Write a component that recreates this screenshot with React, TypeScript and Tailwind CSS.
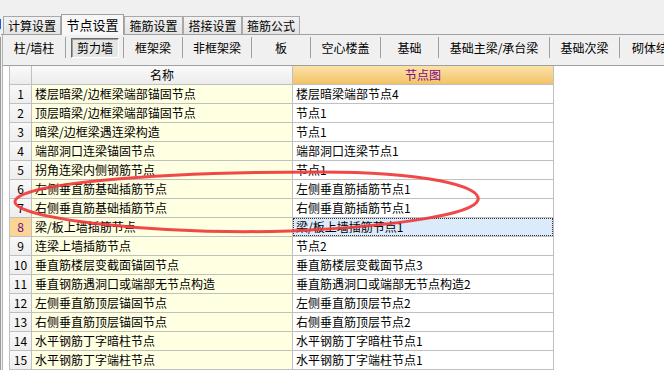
import React from "react";

const rows: [string, string][] = [
  ["楼层暗梁/边框梁端部锚固节点", "楼层暗梁端部节点4"],
  ["顶层暗梁/边框梁端部锚固节点", "节点1"],
  ["暗梁/边框梁遇连梁构造", "节点1"],
  ["端部洞口连梁锚固节点", "端部洞口连梁节点1"],
  ["拐角连梁内侧钢筋节点", "节点1"],
  ["左侧垂直筋基础插筋节点", "左侧垂直筋插筋节点1"],
  ["右侧垂直筋基础插筋节点", "右侧垂直筋插筋节点1"],
  ["梁/板上墙插筋节点", "梁/板上墙插筋节点1"],
  ["连梁上墙插筋节点", "节点2"],
  ["垂直筋楼层变截面锚固节点", "垂直筋楼层变截面节点3"],
  ["垂直钢筋遇洞口或端部无节点构造", "垂直筋遇洞口或端部无节点构造2"],
  ["左侧垂直筋顶层锚固节点", "左侧垂直筋顶层节点2"],
  ["右侧垂直筋顶层锚固节点", "右侧垂直筋顶层节点2"],
  ["水平钢筋丁字暗柱节点", "水平钢筋丁字暗柱节点1"],
  ["水平钢筋丁字端柱节点", "水平钢筋丁字端柱节点1"],
];

const tabs = [
  { label: "计算设置", w: "w-[58px]" },
  { label: "节点设置", w: "w-[63px]", active: true },
  { label: "箍筋设置", w: "w-[59px]" },
  { label: "搭接设置", w: "w-[59px]" },
  { label: "箍筋公式", w: "w-[58px]" },
];

export default function App() {
  return (
    <div className="relative w-[664px] h-[370px] overflow-hidden bg-[#f0f0f0] text-[12px] leading-none text-black font-['Noto_Sans_CJK_SC',sans-serif]">
      <div className="flex h-full">
        {/* left strip */}
        <div className="flex w-[3px] flex-col">
          <div className="h-[19px]" />
          <div className="h-[10px] bg-[#1560d8]" />
          <div className="h-[8px]" />
          <div className="flex-1 border-t border-r border-[#9a9a9a]" />
        </div>
        <div className="w-[5px]" />
        {/* main */}
        <div className="flex flex-1 flex-col">
          <div className="h-[19px]" />
          {/* tab strip */}
          <div className="relative z-10 flex h-[20px] items-end pl-[2px]">
            {tabs.map((t) =>
              t.active ? (
                <div
                  key={t.label}
                  className={`${t.w} -mb-px flex h-[21px] items-start justify-center border border-b-0 border-[#a0a0a0] bg-[#f7f7f7] pt-[3px] text-[13px]`}
                >
                  {t.label}
                </div>
              ) : (
                <div
                  key={t.label}
                  className={`${t.w} flex h-[18px] items-center justify-center border border-b-0 border-[#a8a8a8] bg-gradient-to-b from-[#f2f2f2] to-[#e4e4e4] pt-[1px] text-[12px]`}
                >
                  {t.label}
                </div>
              )
            )}
          </div>
          {/* tab body */}
          <div className="flex flex-1 flex-col border-t border-[#a0a0a0]">
            <div className="ml-px flex flex-1 flex-col border-l border-[#b4b4b4]">
              {/* sub tabs */}
              <div className="flex h-[30px] items-start pt-[2px]">
                <div className="flex h-[21px] w-[63px] items-center justify-center border-r border-[#a0a0a0]">柱/墙柱</div>
                <div className="flex h-[21px] w-[58px] items-center border-r border-[#a0a0a0] pl-[5px]">
                  <div className="flex h-[20px] w-[48px] items-center justify-center border border-t-[#6a6a6a] border-l-[#6a6a6a] border-r-[#ffffff] border-b-[#ffffff] bg-[#e6e6e6] shadow-[inset_1px_1px_0_#a0a0a0]">
                    剪力墙
                  </div>
                </div>
                <div className="flex h-[21px] w-[59px] items-center justify-center border-r border-[#a0a0a0]">框架梁</div>
                <div className="flex h-[21px] w-[69px] items-center justify-center border-r border-[#a0a0a0]">非框架梁</div>
                <div className="flex h-[21px] w-[59px] items-center justify-center border-r border-[#a0a0a0]">板</div>
                <div className="flex h-[21px] w-[70px] items-center justify-center border-r border-[#a0a0a0]">空心楼盖</div>
                <div className="flex h-[21px] w-[58px] items-center justify-center border-r border-[#a0a0a0]">基础</div>
                <div className="flex h-[21px] w-[111px] items-center justify-center border-r border-[#a0a0a0]">基础主梁/承台梁</div>
                <div className="flex h-[21px] w-[70px] items-center justify-center border-r border-[#a0a0a0]">基础次梁</div>
                <div className="flex h-[21px] w-[72px] shrink-0 items-center justify-center">砌体结构</div>
              </div>
              {/* grid panel */}
              <div className="flex-1 border-t border-[#a0a0a0] bg-white pl-[6px]">
                <div className="grid w-[545px] grid-cols-[22px_261px_261px] border-l border-[#c0c0c0]">
                  <div className="h-[19px] border-r border-b border-[#c0c0c0] bg-gradient-to-b from-[#fafafa] to-[#ececec]" />
                  <div className="flex h-[19px] items-center justify-center border-r border-b border-[#c0c0c0] bg-gradient-to-b from-[#fafafa] to-[#ececec]">
                    名称
                  </div>
                  <div className="flex h-[19px] items-center justify-center border-r border-b border-[#c0c0c0] bg-gradient-to-b from-[#fbe2a8] to-[#f2c366] text-[#7a0a8a]">
                    节点图
                  </div>
                  {rows.map(([name, node], i) => {
                    const sel = i === 7;
                    return (
                      <React.Fragment key={i}>
                        <div
                          className={`flex h-[19px] items-center justify-center border-r border-b border-[#c0c0c0] ${
                            sel ? "bg-[#fcd596] text-[#6a0a7a]" : "bg-gradient-to-b from-[#f8f8f8] to-[#eeeeee]"
                          }`}
                        >
                          {i + 1}
                        </div>
                        <div className="flex h-[19px] items-center whitespace-nowrap border-r border-b border-[#c0c0c0] bg-[#ffffe1] pl-[3px]">
                          {name}
                        </div>
                        <div className="h-[19px] border-r border-b border-[#c0c0c0] bg-white">
                          {sel ? (
                            <div className="flex h-full items-center whitespace-nowrap border border-dotted border-[#333] bg-[#dcebfb] pl-[2px]">
                              {node}
                            </div>
                          ) : (
                            <div className="flex h-full items-center whitespace-nowrap pl-[3px]">{node}</div>
                          )}
                        </div>
                      </React.Fragment>
                    );
                  })}
                </div>
              </div>
            </div>
          </div>
        </div>
      </div>
      {/* red annotation ellipse */}
      <svg className="pointer-events-none absolute inset-0" width="664" height="370" viewBox="0 0 664 370">
        <path
          d="M 15 202 C 14 184, 150 172, 320 172 C 425 172, 482 186, 478 200 C 474 214, 400 226, 290 231 C 150 235, 16 218, 15 202 Z"
          fill="none"
          stroke="#f03a3a"
          strokeWidth="3"
          strokeLinecap="round"
          opacity="0.92"
        />
      </svg>
    </div>
  );
}
